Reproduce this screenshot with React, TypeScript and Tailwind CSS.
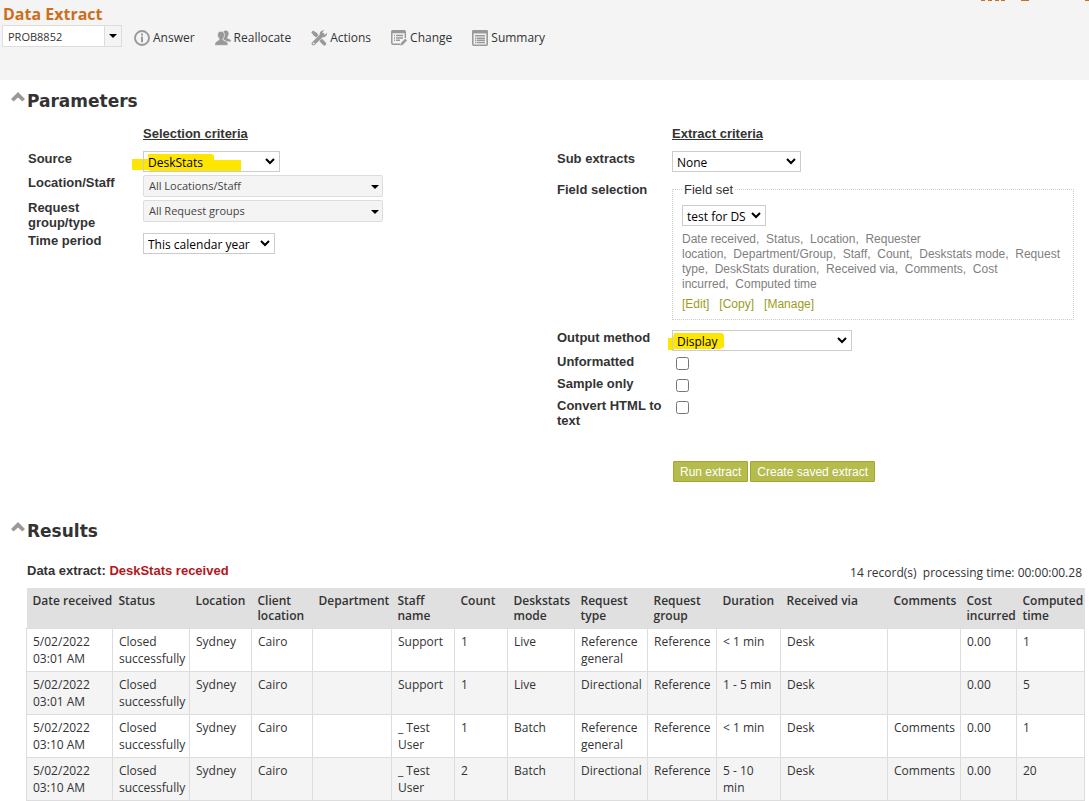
import type { ReactNode } from "react";

const sans = "font-['Open_Sans','Noto_Sans',sans-serif]";
const arial = "font-['Liberation_Sans',Arial,sans-serif]";

const fields = [
  "Date received",
  "Status",
  "Location",
  "Requester location",
  "Department/Group",
  "Staff",
  "Count",
  "Deskstats mode",
  "Request type",
  "DeskStats duration",
  "Received via",
  "Comments",
  "Cost incurred",
  "Computed time",
].join(",\u00a0\u00a0");

const columns = [
  { name: "Date received", width: "w-[86px]" },
  { name: "Status", width: "w-[77px]" },
  { name: "Location", width: "w-[62px]" },
  { name: "Client location", width: "w-[61px]" },
  { name: "Department", width: "w-[79px]" },
  { name: "Staff name", width: "w-[63px]" },
  { name: "Count", width: "w-[53px]" },
  { name: "Deskstats mode", width: "w-[67px]" },
  { name: "Request type", width: "w-[73px]" },
  { name: "Request group", width: "w-[69px]" },
  { name: "Duration", width: "w-[64px]" },
  { name: "Received via", width: "w-[107px]" },
  { name: "Comments", width: "w-[73px]" },
  { name: "Cost incurred", width: "w-[56px]" },
  { name: "Computed time", width: "w-[68px]" },
];

const rows = [
  ["5/02/2022 03:01 AM", "Closed successfully", "Sydney", "Cairo", "", "Support", "1", "Live", "Reference general", "Reference", "< 1 min", "Desk", "", "0.00", "1"],
  ["5/02/2022 03:01 AM", "Closed successfully", "Sydney", "Cairo", "", "Support", "1", "Live", "Directional", "Reference", "1 - 5 min", "Desk", "", "0.00", "5"],
  ["5/02/2022 03:10 AM", "Closed successfully", "Sydney", "Cairo", "", "_ Test User", "1", "Batch", "Reference general", "Reference", "< 1 min", "Desk", "Comments", "0.00", "1"],
  ["5/02/2022 03:10 AM", "Closed successfully", "Sydney", "Cairo", "", "_ Test User", "2", "Batch", "Directional", "Reference", "5 - 10 min", "Desk", "Comments", "0.00", "20"],
];

function InfoIcon() {
  return (
    <svg viewBox="0 0 16 16" className="size-4" fill="none" stroke="#999" aria-hidden="true">
      <circle cx="8" cy="8" r="7" strokeWidth="1.9" />
      <path d="M8 6.600V12.200" strokeWidth="2" />
      <path d="M8 3.600V5.600" strokeWidth="2" />
    </svg>
  );
}

function PeopleIcon() {
  return (
    <svg viewBox="0 0 16 16" className="size-4" fill="#999" aria-hidden="true">
      <path d="M8.400 1.600C9.600 .2 12 .2 13 1.500c.9 1.200.8 3.200.1 4.500-.4.700-.9 1-.9 1.700 0 1 3.600 1.200 3.800 3v.8h-4.600L8 9z" />
      <path
        d="M6 1.200c2.200 0 3.500 1.500 3.500 3.700 0 1.300-.5 2.400-1.100 3.100-.5.600-.7 1.300-.3 1.800.7.900 4.600 1.400 4.900 3.900v1.700H-.2v-1.700c.3-2.500 3.600-3 4.200-3.900.4-.5.1-1.200-.4-1.800C3 7.300 2.500 6.200 2.500 4.900 2.500 2.700 3.800 1.200 6 1.200z"
        stroke="#f4f4f4"
        strokeWidth=".7"
      />
    </svg>
  );
}

function ToolsIcon() {
  return (
    <svg viewBox="0 0 16 16" className="size-4" aria-hidden="true">
      <path d="M4.500 4.500L13.400 13.700" stroke="#999" strokeWidth="3.600" strokeLinecap="round" />
      <path d="M0.200 2.200L2.200 .6 6.200 3.300 6.500 5 4.800 6.500 2.800 5.800z" fill="#999" />
      <path d="M2.400 13.600L11.800 4.300" stroke="#f4f4f4" strokeWidth="4.800" />
      <path d="M2.500 13.500L11.500 4.600" stroke="#999" strokeWidth="3.800" strokeLinecap="round" />
      <path d="M13.300 .2C11-.2 8.500 1.600 8.700 4.400l2.900 2.900c2.800.3 4.800-1.900 4.300-4.600l-2.400 2.300-2-.4-.4-2z" fill="#999" />
      <circle cx="2.700" cy="13.300" r=".9" fill="#f4f4f4" />
    </svg>
  );
}

function ChangeIcon() {
  return (
    <svg viewBox="0 0 16 16" className="size-4" fill="none" stroke="#999" aria-hidden="true">
      <path d="M9 14.300H2.200A1.300 1.300 0 0 1 .8 13V2.200" strokeWidth="1.500" />
      <path d="M14.300 2V8" strokeWidth="1.400" />
      <path d="M0 3.200V1.500Q0 0 1.500 0h12Q15 0 15 1.500v1.700z" fill="#999" stroke="none" />
      <path d="M3 5.600h1M5 5.600h7M3 7.900h1M5 7.900h7M3 10.200h1M5 10.200h4" strokeWidth="1.500" />
      <path d="M9.200 15.800l.7-2.900 4.400-4.400 1.700 1.900-4.200 4.400z" fill="#999" stroke="none" />
    </svg>
  );
}

function SummaryIcon() {
  return (
    <svg viewBox="0 0 16 16" className="size-4" fill="none" stroke="#999" aria-hidden="true">
      <rect x=".8" y=".8" width="14.400" height="14.400" rx="1" strokeWidth="1.600" />
      <path d="M0 3.500V1.500Q0 0 1.500 0h13Q16 0 16 1.500v2z" fill="#999" stroke="none" />
      <path d="M3 5.800h10M3 8.200h1.400M5 8.200h8M3 10.300h1.400M5 10.300h8M3 12.400h1.400M5 12.400h8" strokeWidth="1.500" />
    </svg>
  );
}

function Triangle() {
  return (
    <svg viewBox="0 0 8 4" className="h-1 w-2 shrink-0" fill="#000" aria-hidden="true">
      <path d="M0 0h8L4 4z" />
    </svg>
  );
}

function ToolLink({ icon, children }: { icon: ReactNode; children: ReactNode }) {
  return (
    <a href="#" className="flex items-center gap-[3px] text-[#333]">
      {icon}
      {children}
    </a>
  );
}

function SectionTitle({ children }: { children: ReactNode }) {
  return (
    <h2 className="flex items-start gap-[2px] pb-[2px] pl-[11px] font-['DejaVu_Sans',Verdana,sans-serif] text-[17px] leading-5 font-bold text-[#333]">
      <svg viewBox="0 0 14 10" className="mt-px h-[10px] w-[14px]" fill="#999" aria-hidden="true">
        <path d="M7 0l7 7-2.600 2.600L7 5.400 2.600 9.600 0 7z" />
      </svg>
      {children}
    </h2>
  );
}

function Select({ id, value, className }: { id: string; value: string; className: string }) {
  return (
    <span className={`relative inline-flex h-[21px] ${className}`}>
      <select
        id={id}
        defaultValue={value}
        className="w-full appearance-none border border-[#ccc] bg-transparent pt-[2px] pl-1 text-[12px] leading-[17px] text-black"
      >
        <option>{value}</option>
      </select>
      <svg viewBox="0 0 10 7" className="pointer-events-none absolute top-[7px] right-[5px] h-[7px] w-[10px]" fill="none" stroke="#000" strokeWidth="2" aria-hidden="true">
        <path d="M1 1l4 4 4-4" />
      </svg>
    </span>
  );
}

function DropButton({ id, children }: { id: string; children: ReactNode }) {
  return (
    <button
      id={id}
      type="button"
      className="flex h-[22px] w-60 items-center justify-between rounded-[2px] border border-[#ddd] bg-[#f4f4f4] pt-px pr-[3px] pl-[5px] text-[11px] text-[#444]"
    >
      {children}
      <Triangle />
    </button>
  );
}

function FieldLabel({ htmlFor, children }: { htmlFor: string; children: ReactNode }) {
  return (
    <label htmlFor={htmlFor} className={`${arial} w-[115px] shrink-0 pr-2 text-[13px] leading-[15px] font-bold text-[#333]`}>
      {children}
    </label>
  );
}

function CheckRow({ id, children }: { id: string; children: ReactNode }) {
  return (
    <div className="flex min-h-[22px] items-start">
      <FieldLabel htmlFor={id}>{children}</FieldLabel>
      <input id={id} type="checkbox" className="mt-[3px] ml-1 size-[13px]" />
    </div>
  );
}

export default function App() {
  return (
    <div className={`${sans} h-screen overflow-hidden bg-white text-[12px] text-[#333]`}>
      <header className="relative h-20 bg-[#f4f4f4] pt-[5px] pl-[2px]">
        <svg viewBox="0 0 108 2" className="absolute top-0 right-0 h-[2px] w-[108px]" fill="#cc6e1d" aria-hidden="true">
          <path d="M0 0h4v1H0zM7 0h4v1H7zM14 0h4v1h-4zM20 0h4v1h-4zM40 0h8v1h-8zM104 0h4v1h-4z" />
        </svg>
        <h1 className="pl-px text-[16px] leading-[18px] font-bold text-[#cc6e1d]">Data Extract</h1>
        <nav className="mt-[2px] flex items-center gap-3">
          <div className="flex h-[22px] w-[120px] border border-[#ddd] bg-white">
            <input aria-label="Problem" defaultValue="PROB8852" className="w-full min-w-0 pt-[2px] pl-[5px] text-[11px] outline-none" />
            <button type="button" aria-label="Open list" className="flex w-[17px] shrink-0 items-center justify-center border-l border-[#ddd] bg-[#f4f4f4]">
              <Triangle />
            </button>
          </div>
          <div className="flex gap-5 pt-[3px]">
            <ToolLink icon={<InfoIcon />}>Answer</ToolLink>
            <ToolLink icon={<PeopleIcon />}>Reallocate</ToolLink>
            <ToolLink icon={<ToolsIcon />}>Actions</ToolLink>
            <ToolLink icon={<ChangeIcon />}>Change</ToolLink>
            <ToolLink icon={<SummaryIcon />}>Summary</ToolLink>
          </div>
        </nav>
      </header>

      <main>
        <section className="pt-[11px]">
          <SectionTitle>Parameters</SectionTitle>
          <div className="flex pt-[13px] pr-[3px] pl-7">
            <div className="w-1/2">
              <h3 className={`${arial} pl-[115px] text-[13px] leading-[15px] font-bold underline`}>Selection criteria</h3>
              <div className="mt-[10px] flex">
                <FieldLabel htmlFor="source">Source</FieldLabel>
                <div className="relative isolate flex">
                  <svg viewBox="0 0 110 20" className="absolute top-[2px] -left-[11px] -z-10 h-5 w-[110px]" fill="#ffe600" aria-hidden="true">
                    <path d="M16 1h63l3 1v5h27v11H82v1H20L16 17H0V6h16z" />
                  </svg>
                  <Select id="source" value="DeskStats" className="w-[137px]" />
                </div>
              </div>
              <div className="mt-[3px] flex">
                <FieldLabel htmlFor="location">Location/Staff</FieldLabel>
                <DropButton id="location">All Locations/Staff</DropButton>
              </div>
              <div className="mt-[3px] flex">
                <FieldLabel htmlFor="group">Request group/type</FieldLabel>
                <DropButton id="group">All Request groups</DropButton>
              </div>
              <div className="mt-[3px] flex">
                <FieldLabel htmlFor="period">Time period</FieldLabel>
                <Select id="period" value="This calendar year" className="w-[132px]" />
              </div>
            </div>

            <div className="w-1/2 pr-3">
              <h3 className={`${arial} pl-[115px] text-[13px] leading-[15px] font-bold underline`}>Extract criteria</h3>
              <div className="mt-[10px] flex">
                <FieldLabel htmlFor="sub">Sub extracts</FieldLabel>
                <Select id="sub" value="None" className="w-[129px]" />
              </div>
              <div className="mt-[10px] flex">
                <FieldLabel htmlFor="fieldset">Field selection</FieldLabel>
                <fieldset className={`${arial} min-w-0 grow border border-dotted border-[#ccc] px-[9px] pb-[7px] text-[12px] leading-[15px] text-[#808080]`}>
                  <legend className="px-[2px] text-[13px] text-[#333]">Field set</legend>
                  <div className={`${sans} flex pt-2`}>
                    <Select id="fieldset" value="test for DS" className="w-[84px]" />
                  </div>
                  <p className="mt-[6px]">{fields}</p>
                  <p className="mt-[5px] flex gap-[10px] text-[#9c9c1c]">
                    <a href="#">[Edit]</a>
                    <a href="#">[Copy]</a>
                    <a href="#">[Manage]</a>
                  </p>
                </fieldset>
              </div>
              <div className="mt-[10px] flex">
                <FieldLabel htmlFor="output">Output method</FieldLabel>
                <div className="relative isolate flex">
                  <svg viewBox="0 0 56 18" className="absolute top-[3px] -left-[4px] -z-10 h-[18px] w-14" fill="#ffe600" aria-hidden="true">
                    <path d="M6 0h48l2 2v12l-4 2H6v1H0V5h5z" />
                  </svg>
                  <Select id="output" value="Display" className="w-[180px]" />
                </div>
              </div>
              <div className="mt-[3px]">
                <CheckRow id="unformatted">Unformatted</CheckRow>
                <CheckRow id="sample">Sample only</CheckRow>
                <CheckRow id="convert">Convert HTML to text</CheckRow>
              </div>
              <div className={`${arial} mt-[33px] flex gap-[2px] pl-[116px] text-[12px] text-white`}>
                <button type="button" className="h-[21px] rounded-[1px] border border-[#a2a72a] bg-[#b5bb4c] px-[6px]">Run extract</button>
                <button type="button" className="h-[21px] rounded-[1px] border border-[#a2a72a] bg-[#b5bb4c] px-[6px]">Create saved extract</button>
              </div>
            </div>
          </div>
        </section>

        <section className="pt-[39px]">
          <SectionTitle>Results</SectionTitle>
          <div className="flex items-start justify-between pt-5 pr-[7px] pb-[6px] pl-[27px]">
            <h3 className={`${arial} text-[13px] leading-[15px] font-bold`}>
              Data extract: <span className="text-[#b3161b]">DeskStats received</span>
            </h3>
            <p className="leading-[19px]">14 record(s)&nbsp; processing time: 00:00:00.28</p>
          </div>
          <div className="pr-1 pl-[26px]">
            <table className="w-full table-fixed border-collapse text-left">
              <thead>
                <tr className="h-10 bg-[#e0e0e0]">
                  {columns.map((c) => (
                    <th key={c.name} scope="col" className={`${c.width} pt-[5px] pl-[6px] align-top text-[12px] leading-[15px] font-semibold`}>
                      {c.name}
                    </th>
                  ))}
                </tr>
              </thead>
              <tbody>
                {rows.map((row, i) => (
                  <tr key={i} className="h-[43px] odd:bg-white even:bg-[#f4f4f4]">
                    {row.map((cell, j) => (
                      <td key={j} className="border border-[#ddd] py-1 pr-1 pl-[6px] align-top text-[12px] leading-[17px]">
                        {cell}
                      </td>
                    ))}
                  </tr>
                ))}
              </tbody>
            </table>
          </div>
        </section>
      </main>
    </div>
  );
}
